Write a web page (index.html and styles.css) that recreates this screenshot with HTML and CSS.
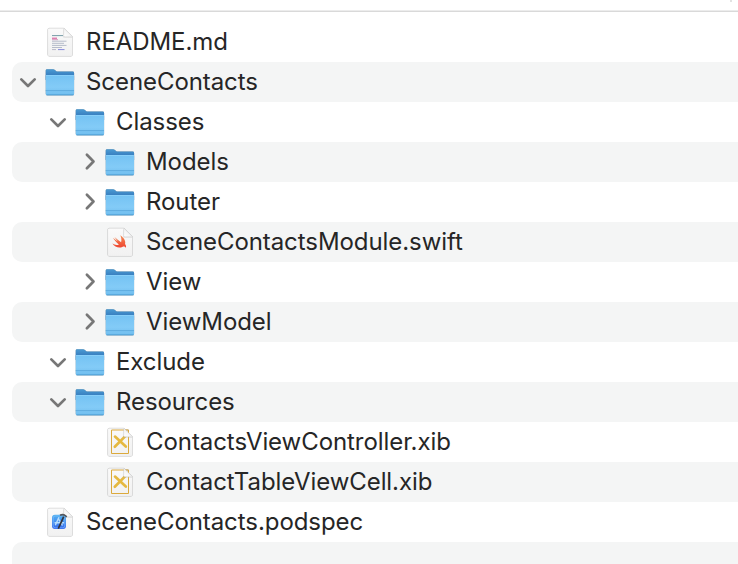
FILE: index.html
```
<!DOCTYPE html>
<html lang="en">
<head>
<meta charset="utf-8">
<title>Project Navigator</title>
<link rel="stylesheet" href="styles.css">
</head>
<body>
<svg class="defs" width="0" height="0" aria-hidden="true">
  <defs>
    <linearGradient id="paper" x1="0" y1="0" x2="0" y2="1"><stop offset="0" stop-color="#fafafa"/><stop offset="1" stop-color="#f1f1f1"/></linearGradient>
    <linearGradient id="fold" x1="0" y1="1" x2="1" y2="0"><stop offset="0" stop-color="#fff"/><stop offset=".5" stop-color="#f4f4f4"/><stop offset="1" stop-color="#ddd"/></linearGradient>
    <linearGradient id="back" x1="0" y1="0" x2="0" y2="1"><stop offset="0" stop-color="#4c9bd3"/><stop offset=".5" stop-color="#3a82c2"/><stop offset="1" stop-color="#3a82c2"/></linearGradient>
    <linearGradient id="front" x1="0" y1="0" x2="0" y2="1"><stop offset="0" stop-color="#74c2f3"/><stop offset=".6" stop-color="#83cbf7"/><stop offset="1" stop-color="#6fbdee"/></linearGradient>
    <linearGradient id="bird" x1="0" y1="0" x2="0" y2="1"><stop offset="0" stop-color="#f58a52"/><stop offset="1" stop-color="#ee4431"/></linearGradient>
    <linearGradient id="app" x1="0" y1="0" x2="0" y2="1"><stop offset="0" stop-color="#52b2f2"/><stop offset="1" stop-color="#3568ee"/></linearGradient>
    <symbol id="folder" viewBox="0 0 40 40">
      <path d="M5.7 10.5q0-1.3 1.3-1.3h6.2q.8 0 1.4.6l1.5 1.3q.6.5 1.4.5h15.2q1.4 0 1.4 1.4v7H5.7z" fill="url(#back)"/>
      <path d="M5.7 16q0-1 1-1h26.4q1 0 1 1v17.7q0 1.6-1.6 1.6H7.3q-1.6 0-1.6-1.6z" fill="url(#front)"/>
      <path d="M6 15.5h27.8" stroke="#8fd3fa" stroke-width=".7"/>
      <path d="M5.8 30.6h28.2" stroke="#57a5d9" stroke-width=".8"/>
      <path d="M6.5 34.8h27" stroke="#4e9fd5" stroke-width=".9"/>
    </symbol>
    <symbol id="page" viewBox="0 0 40 40">
      <path d="M7.7 9.8q0-1.6 1.6-1.6h14.4l8.8 8.8v17.6q0 1.6-1.6 1.6H9.3q-1.6 0-1.6-1.6z" fill="url(#paper)" stroke="#dcdcdc" stroke-width=".3"/>
    </symbol>
    <symbol id="corner" viewBox="0 0 40 40">
      <path d="M23.4 17.6V9l9.1 8.6z" fill="#a8a8a8" opacity=".45"/>
      <path d="M23.8 8.2v7.2q0 1.4 1.4 1.4h7.2z" fill="url(#fold)" stroke="#d0d0d0" stroke-width=".3"/>
    </symbol>
    <symbol id="readme" viewBox="0 0 40 40">
      <use href="#page"/>
      <g fill="none" stroke-width="1">
        <path d="M12 15.6h11" stroke="#779ba6"/><path d="M12 18.2h5" stroke="#d44c92"/><path d="M12 19.7h6" stroke="#d698bd"/>
        <path d="M12 21.2h14.5M12 23.3h12M12 25.4h14.5M12 27.5h10" stroke="#b6bcca"/><path d="M12 29.6h4" stroke="#b9b9c8"/><path d="M18 29.6h6.5" stroke="#8689dc"/>
      </g>
      <use href="#corner"/>
    </symbol>
    <symbol id="swift" viewBox="0 0 40 40">
      <use href="#page"/><use href="#corner"/>
      <path transform="translate(0 1)" d="M20.2 14.3c4.2 2.8 5.8 6.3 4.8 8.7 1.2 1.4 1.3 2.9.8 3.8-1-1.6-2.3-1.4-3.5-.8-3.6 1.6-7.6-.1-9.9-3.4 2.2 1.4 4.6 1.8 6.5.8-2.4-1.8-4.5-4.2-6-6.6 1.8 1.5 3.4 2.7 4.9 3.6-1.2-1.3-2.3-2.8-3.3-4.3 2.1 2 4.3 3.8 6.6 5.1.7-2.1.3-4.7-.9-6.9z" fill="url(#bird)"/>
    </symbol>
    <symbol id="xib" viewBox="0 0 40 40">
      <use href="#page"/>
      <path d="M11.5 10h17v23.5h-17z" fill="none" stroke="#dba93c" stroke-width="1"/>
      <path d="M15 16.6l10.8 10M25.8 15.6L14.8 26.8" fill="none" stroke="#e5b941" stroke-width="2.7" stroke-linecap="round"/>
      <use href="#corner"/>
    </symbol>
    <symbol id="podspec" viewBox="0 0 40 40">
      <use href="#page"/><use href="#corner"/>
      <rect x="12" y="14.8" width="14" height="14.2" rx="3" fill="url(#app)"/>
      <rect x="13.2" y="16" width="11.6" height="11.8" rx="2" fill="none" stroke="#91c9fa" stroke-width=".5"/>
      <path d="M19 17.2l-3.7 8M18 18l4.5 7.5M14.5 22.8h9.5" stroke="#b8ddfc" stroke-width="1.4" fill="none"/>
      <path d="M23.7 16.6l-5.4 12" stroke="#34343c" stroke-width="1.7"/>
      <path d="M20 15.2q3-1.3 5.3.4l1.5 1.3" stroke="#55575c" stroke-width="1.6" fill="none"/>
    </symbol>
    <symbol id="open" viewBox="0 0 20 20"><path d="M3.3 7.4L10 14l6.7-6.6"/></symbol>
    <symbol id="closed" viewBox="0 0 20 20"><path d="M8.9 2.8l6.6 6.7-6.6 6.7"/></symbol>
  </defs>
</svg>
<header class="topbar"><span class="mark"></span></header>
<main class="tree">
  <div class="row"><span class="arrow"></span><svg class="icon"><use href="#readme"/></svg><span class="label">README.md</span></div>
  <div class="row"><svg class="arrow"><use href="#open"/></svg><svg class="icon"><use href="#folder"/></svg><span class="label">SceneContacts</span></div>
  <div class="row level-1"><svg class="arrow"><use href="#open"/></svg><svg class="icon"><use href="#folder"/></svg><span class="label">Classes</span></div>
  <div class="row level-2"><svg class="arrow"><use href="#closed"/></svg><svg class="icon"><use href="#folder"/></svg><span class="label">Models</span></div>
  <div class="row level-2"><svg class="arrow"><use href="#closed"/></svg><svg class="icon"><use href="#folder"/></svg><span class="label">Router</span></div>
  <div class="row level-2"><span class="arrow"></span><svg class="icon"><use href="#swift"/></svg><span class="label">SceneContactsModule.swift</span></div>
  <div class="row level-2"><svg class="arrow"><use href="#closed"/></svg><svg class="icon"><use href="#folder"/></svg><span class="label">View</span></div>
  <div class="row level-2"><svg class="arrow"><use href="#closed"/></svg><svg class="icon"><use href="#folder"/></svg><span class="label">ViewModel</span></div>
  <div class="row level-1"><svg class="arrow"><use href="#open"/></svg><svg class="icon"><use href="#folder"/></svg><span class="label">Exclude</span></div>
  <div class="row level-1"><svg class="arrow"><use href="#open"/></svg><svg class="icon"><use href="#folder"/></svg><span class="label">Resources</span></div>
  <div class="row level-2"><span class="arrow"></span><svg class="icon"><use href="#xib"/></svg><span class="label">ContactsViewController.xib</span></div>
  <div class="row level-2"><span class="arrow"></span><svg class="icon"><use href="#xib"/></svg><span class="label">ContactTableViewCell.xib</span></div>
  <div class="row"><span class="arrow"></span><svg class="icon"><use href="#podspec"/></svg><span class="label">SceneContacts.podspec</span></div>
  <div class="row"></div>
</main>
</body>
</html>
```
FILE: styles.css
```
* { box-sizing: border-box; }
body {
  margin: 0;
  height: 564px;
  overflow: hidden;
  background: #fff;
  color: #262626;
  font-family: Inter, "Liberation Sans", sans-serif;
}
.defs { position: absolute; }
.topbar {
  display: flex;
  justify-content: flex-end;
  height: 12px;
  padding-right: 6px;
  border-bottom: 1px solid #d9d9d9;
  box-shadow: inset 0 -1px #ececec;
}
.mark { width: 2px; height: 2px; background: #e2e2e2; }
.tree { padding: 10px 0 0 12px; }
.row {
  display: flex;
  align-items: center;
  height: 40px;
  padding-left: 6px;
  border-radius: 10px 0 0 10px;
}
.row:nth-child(even) { background: #f4f5f5; }
.level-1 { padding-left: 36px; }
.level-2 { padding-left: 66px; }
.arrow {
  flex: none;
  width: 20px;
  height: 20px;
  margin-right: 2px;
  fill: none;
  stroke: #777;
  stroke-width: 2.7;
  stroke-linecap: round;
  stroke-linejoin: round;
}
.icon {
  flex: none;
  width: 40px;
  height: 40px;
  margin: -4px 6px 0 0;
  filter: drop-shadow(0 .8px .7px rgba(0, 0, 0, .35));
}
.label {
  font-size: 24px;
  line-height: 40px;
  letter-spacing: -.07px;
  white-space: nowrap;
}
```
